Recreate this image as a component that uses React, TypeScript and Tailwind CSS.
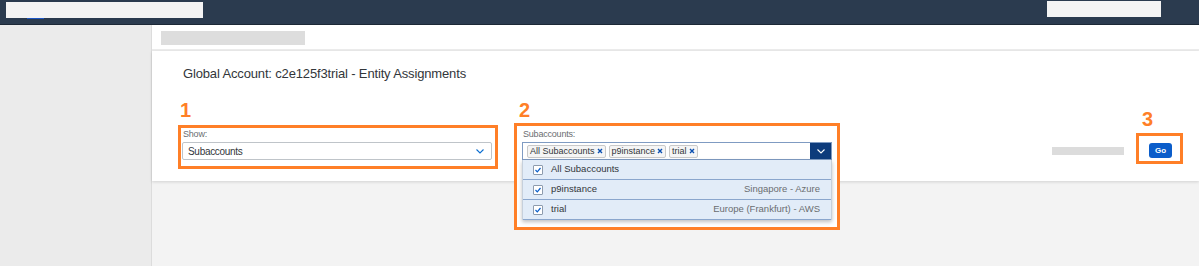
const Chevron = ({ color }: { color: string }) => (
  <svg width="8" height="5" viewBox="0 0 8 5" fill="none">
    <path d="M0.5 0.5L4 4L7.5 0.5" stroke={color} strokeWidth="1.1" />
  </svg>
);

const Token = ({ label }: { label: string }) => (
  <span className="flex h-[13px] items-center gap-[2px] rounded-[2px] border border-[#c9c9c9] bg-[#f5f5f5] px-[2px] text-[9px] leading-none text-[#32363a]">
    {label}
    <svg width="6" height="6" viewBox="0 0 6 6" fill="none">
      <path d="M1 1L5 5M5 1L1 5" stroke="#0a4fb0" strokeWidth="1.4" />
    </svg>
  </span>
);

const Check = () => (
  <span className="flex h-[10px] w-[10px] items-center justify-center rounded-[1px] border border-[#8d9bad] bg-white">
    <svg width="8" height="8" viewBox="0 0 8 8" fill="none">
      <path d="M1.5 4L3.3 5.8L6.5 2" stroke="#0a5ec9" strokeWidth="1.2" />
    </svg>
  </span>
);

const rows = [
  { name: 'All Subaccounts', region: '' },
  { name: 'p9instance', region: 'Singapore - Azure' },
  { name: 'trial', region: 'Europe (Frankfurt) - AWS' },
];

const Step = ({ n }: { n: string }) => (
  <div className="h-[20px] text-[20px] font-bold leading-[20px] text-[#ff7f27]">{n}</div>
);

export default function App() {
  return (
    <div className="h-[266px] w-[1199px] overflow-hidden bg-[#f3f3f3] font-['Liberation_Sans',Arial,sans-serif]">
      {/* Shell bar */}
      <header className="flex h-[25px] items-start justify-between border-b border-[#1c2836] bg-[#2b3b4f]">
        <div className="ml-[6px] mt-[2px] flex flex-col">
          <div className="h-[16px] w-[197px] bg-[#f4f4f4]" />
          <div className="ml-[21px] h-[1px] w-[17px] bg-[#1d56c4]" />
        </div>
        <div className="mr-[38px] mt-[1px] h-[16px] w-[114px] bg-[#f4f4f4]" />
      </header>

      <div className="flex h-[241px]">
        {/* Side nav */}
        <aside className="w-[152px] shrink-0 border-r border-[#dcdcdc] bg-[#ebebeb]" />

        <main className="flex flex-1 flex-col">
          {/* Breadcrumb strip */}
          <div className="h-[26px] border-b-2 border-[#ececec] bg-white pl-[9px] pt-[6px]">
            <div className="h-[14px] w-[144px] bg-[#dddddd]" />
          </div>

          {/* Filter panel */}
          <section className="h-[130px] bg-white pt-[15px] shadow-[0_1px_3px_rgba(0,0,0,0.14)]">
            <h1 className="pl-[31px] text-[13px] leading-[16px] tracking-[-0.15px] text-[#32363a]">
              Global Account: c2e125f3trial - Entity Assignments
            </h1>

            <div className="mt-[18px] flex items-start pl-[26px] pr-[16px]">
              {/* 1 - Show */}
              <div className="flex w-[320px] flex-col">
                <div className="pl-[2px]">
                  <Step n="1" />
                </div>
                <div className="mt-[5px] h-[44px] border-[3px] border-[#ff7f27] bg-white pl-[1px]">
                  <div className="pl-[1px] text-[9px] leading-[12px] tracking-[-0.2px] text-[#6a6d70]">Show:</div>
                  <div className="mt-[2px] flex h-[18px] w-[310px] items-center justify-between rounded-[2px] border border-[#bfc4c9] bg-white pl-[5px] pr-[7px]">
                    <span className="text-[10px] tracking-[-0.3px] text-[#32363a]">Subaccounts</span>
                    <Chevron color="#0a6ed1" />
                  </div>
                </div>
              </div>

              {/* 2 - Subaccounts */}
              <div className="ml-[16px] flex w-[326px] flex-col">
                <div className="pl-[5px]">
                  <Step n="2" />
                </div>
                <div className="mt-[3px] border-[3px] border-[#ff7f27] bg-white pb-[7px] pl-[5px] pt-[2px]">
                  <div className="pl-[1px] text-[9px] leading-[12px] tracking-[-0.2px] text-[#6a6d70]">Subaccounts:</div>
                  <div className="mt-[2px] w-[310px]">
                    <div className="flex h-[18px] items-stretch border border-[#7f9bc2] bg-white">
                      <div className="flex flex-1 items-center gap-[3px] pl-[4px]">
                        <Token label="All Subaccounts" />
                        <Token label="p9instance" />
                        <Token label="trial" />
                      </div>
                      <div className="flex w-[21px] items-center justify-center bg-[#0d3b7b]">
                        <Chevron color="#ffffff" />
                      </div>
                    </div>
                    <ul className="border-x border-[#c6d0dc] shadow-[0_2px_4px_rgba(0,0,0,0.25)]">
                      {rows.map((r) => (
                        <li
                          key={r.name}
                          className="flex h-[20px] items-center border-b border-[#8aa6cd] bg-[#e2ecf8] pl-[10px] pr-[11px] text-[9.5px] text-[#32363a]"
                        >
                          <Check />
                          <span className="ml-[8px] flex-1">{r.name}</span>
                          <span className="text-[#6a6d70]">{r.region}</span>
                        </li>
                      ))}
                    </ul>
                  </div>
                </div>
              </div>

              <div className="flex-1" />

              <div className="mt-[47px] h-[8px] w-[72px] bg-[#dcdcdc]" />

              {/* 3 - Go */}
              <div className="ml-[12px] mt-[9px] flex w-[47px] flex-col">
                <div className="pl-[6px]">
                  <Step n="3" />
                </div>
                <div className="mt-[4px] h-[31px] border-[3px] border-[#ff7f27] bg-white pl-[10px] pt-[7px]">
                  <button className="flex h-[15px] w-[23px] items-center justify-center rounded-[3px] bg-[#0b5dca] text-[8px] font-bold text-white">
                    Go
                  </button>
                </div>
              </div>
            </div>
          </section>
        </main>
      </div>
    </div>
  );
}
